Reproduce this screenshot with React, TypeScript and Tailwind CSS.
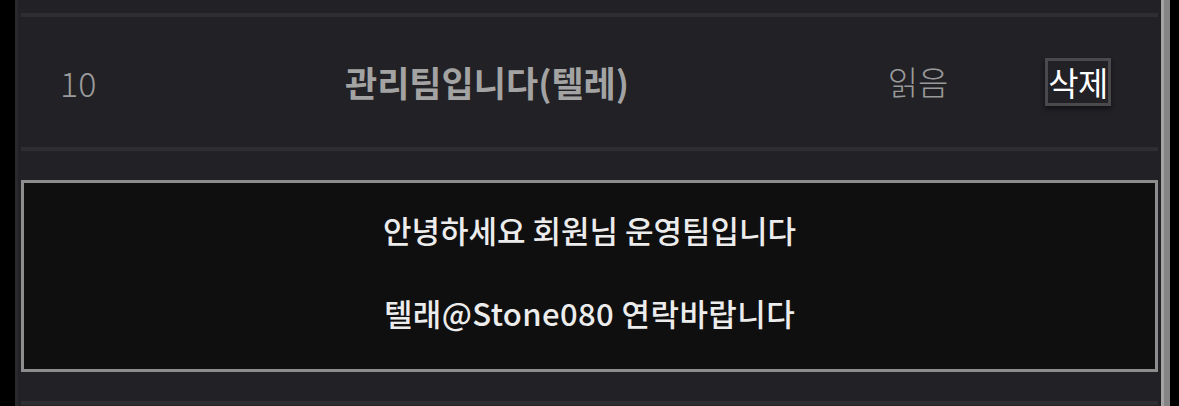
export default function App() {
  const font = { fontFamily: '"Noto Sans CJK KR", "Noto Sans", sans-serif' };
  return (
    <div className="flex h-[406px] w-[1179px] overflow-hidden bg-black" style={font}>
      <div className="w-[15px] shrink-0 bg-black" />
      <div className="w-[3px] shrink-0 bg-[#2a2a2e]" />
      <div className="flex w-[1143px] shrink-0 flex-col bg-[#212126] px-[3px]">
        <div className="h-[13px] shrink-0" />
        <div className="h-[4px] shrink-0 bg-[#2d2d32]" />
        <div className="grid h-[130px] shrink-0 grid-cols-[117px_700px_160px_160px] items-center">
          <div className="pl-[39px] text-[34px] font-light text-[#9a9a9a]">10</div>
          <div className="pr-[2px] text-center text-[35px] font-bold text-[#a3a3a3]">관리팀입니다(텔레)</div>
          <div className="text-center text-[33px] font-light text-[#9a9a9a]">읽음</div>
          <div className="flex justify-center">
            <div className="flex h-[48px] w-[66px] items-center justify-center whitespace-nowrap border-[3px] border-[#4a4a4c] text-[33px] leading-none tracking-[-0.5px] text-white shadow-[0_3px_5px_rgba(0,0,0,0.45)]">
              삭제
            </div>
          </div>
        </div>
        <div className="h-[4px] shrink-0 bg-[#2d2d32]" />
        <div className="h-[29px] shrink-0" />
        <div className="flex h-[192px] shrink-0 flex-col items-center justify-center border-[3px] border-[#8d8d8d] bg-[#0f0f10] pb-[10px] text-[31px] font-medium leading-[41.5px] text-[#ececec]">
          <p>안녕하세요 회원님 운영팀입니다</p>
          <p>&nbsp;</p>
          <p className="tracking-[0.4px]">텔래@Stone080 연락바랍니다</p>
        </div>
        <div className="h-[29px] shrink-0" />
        <div className="h-[4px] shrink-0 bg-[#2d2d32]" />
      </div>
      <div className="w-[3px] shrink-0 bg-[#a3a3a3]" />
      <div className="w-[6px] shrink-0 bg-[#848484]" />
      <div className="w-[9px] shrink-0 bg-black" />
    </div>
  );
}
